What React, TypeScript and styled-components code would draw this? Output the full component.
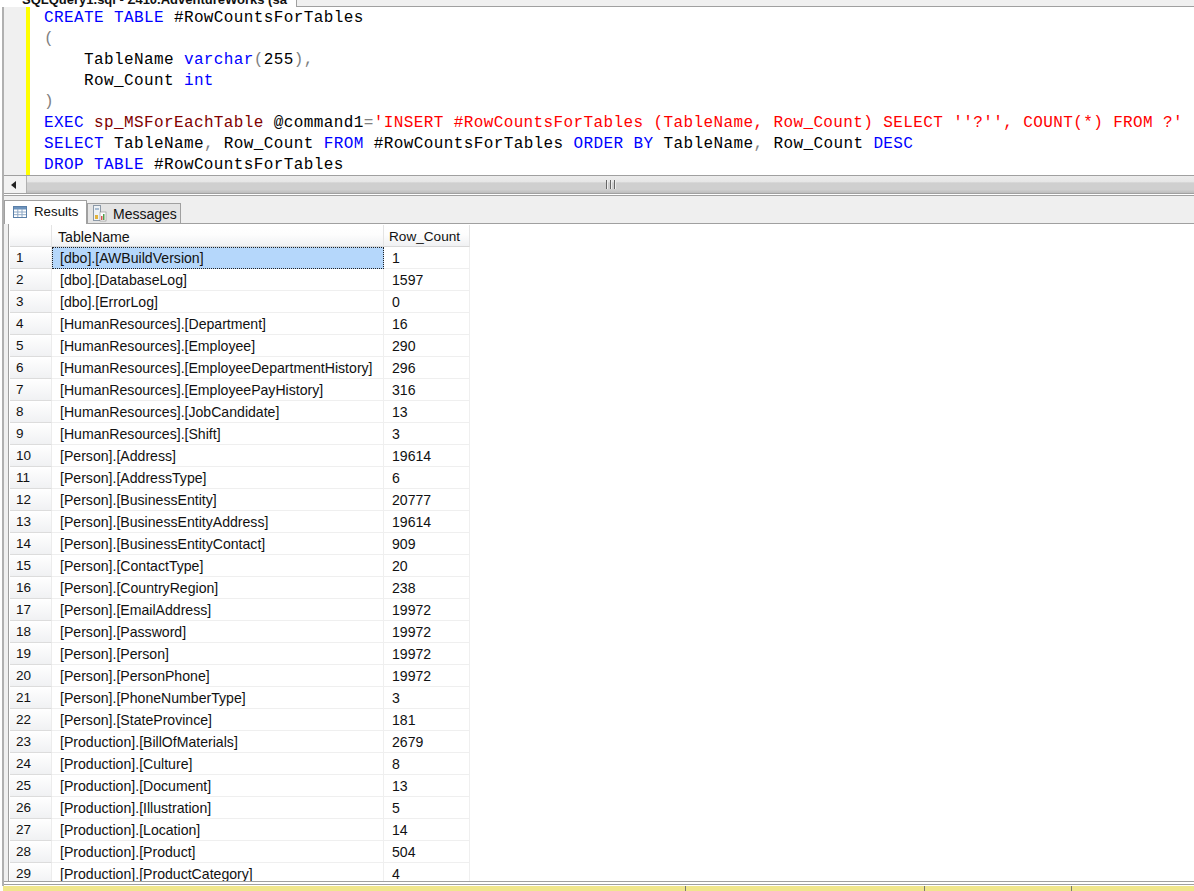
import React from "react";
import styled, { createGlobalStyle } from "styled-components";

const Global = createGlobalStyle`
  html, body { margin: 0; padding: 0; background: #fff; overflow: hidden; }
  #root { width: 1194px; height: 891px; }
`;

const Page = styled.div`
  width: 1194px; height: 891px; display: flex; flex-direction: column; overflow: hidden;
  background: #fff; font-family: "Liberation Sans", Arial, sans-serif;
`;
const TabStrip = styled.div`
  height: 7px; display: flex; background: #fff; overflow: hidden; flex: none;
`;
const DocTab = styled.div`
  width: 296px; flex: none; height: 7px; overflow: hidden; box-sizing: border-box;
  font: bold 13px "Liberation Sans", sans-serif; color: #111;
  white-space: nowrap; line-height: 0px; padding-left: 22px; padding-right: 2px;
`;
const TabStripRest = styled.div`
  flex: 1; height: 7px; box-sizing: border-box; background: #f0f0f0;
  border-left: 1px solid #a0a0a0; border-bottom: 1px solid #a0a0a0;
`;
const Frame = styled.div`
  flex: 1; min-height: 0; display: flex; flex-direction: column;
  margin-left: 2px; border-left: 2px solid #b0b0b0;
`;
const Editor = styled.div`
  height: 168px; flex: none; display: flex;
`;
const Gutter = styled.div`
  width: 22px; background: #f0f0f0; flex: none;
`;
const ChangeBar = styled.div`
  width: 4px; background: #ffff00; flex: none;
`;
const Code = styled.pre`
  margin: 0; padding: 1px 0 0 14px; font: 16px/21px "Liberation Mono", monospace; letter-spacing: 0.39px; color: #000;
  white-space: pre; overflow: hidden; flex: 1; min-width: 0;
`;
const K = styled.span`color: #0000ff;`;
const G = styled.span`color: #808080;`;
const S = styled.span`color: #ff0000;`;
const M = styled.span`color: #800000;`;

const HScroll = styled.div`
  height: 17px; flex: none; display: flex; border-top: 1px solid #a0a0a0; border-bottom: 1px solid #a0a0a0;
  background: linear-gradient(#ececec 0, #e6e6e6 35%, #cfcfcf 40%, #cfcfcf 80%, #bdbdbd 100%);
`;
const ArrowBox = styled.div`
  width: 23px; flex: none; box-sizing: border-box; padding-right: 3px; background: #f2f2f2;
  display: flex; align-items: center; justify-content: center; border-right: 1px solid #b0b0b0;
`;
const Thumb = styled.div`
  flex: 1; display: flex; align-items: center; justify-content: center;
`;
const Grip = styled.div`
  display: flex; gap: 2px;
  i { display: block; width: 1px; height: 9px; background: #666; border-right: 1px solid #eee; }
`;
const TabBar = styled.div`
  height: 29px; flex: none; box-sizing: border-box; background: #efefef; display: flex; align-items: flex-end;
  border-top: 1px solid #a0a0a0; border-bottom: 1px solid #a0a0a0; margin-top: 1px;
`;
const ResTab = styled.div<{ $active?: boolean }>`
  height: ${p => (p.$active ? 24 : 21)}px; box-sizing: border-box; display: flex; align-items: center;
  gap: ${p => (p.$active ? 7 : 6)}px;
  font-size: ${p => (p.$active ? 13.3 : 14)}px; color: #111;
  width: ${p => (p.$active ? 83 : 94)}px;
  padding: 0 0 ${p => (p.$active ? 2 : 0)}px ${p => (p.$active ? 8 : 4)}px;
  background: ${p => (p.$active ? "#fff" : "#e4e4e4")};
  border: 1px solid #a0a0a0; border-bottom: ${p => (p.$active ? "0" : "1px solid #a0a0a0")};
  margin-bottom: -1px; position: relative;
`;
const Results = styled.div`
  flex: 1; min-height: 0; overflow: hidden; background: #fff; display: flex;
`;
const Margin = styled.div`
  width: 4px; flex: none; background: #f0f0f0; border-right: 1px solid #a0a0a0;
`;
const GridArea = styled.div`
  flex: 1; min-width: 0; overflow: hidden; padding-left: 1px;
`;
const Table = styled.div`
  display: grid; grid-template-columns: 42px 332px 86px; grid-auto-rows: 22px; width: 460px;
  font-size: 14.1px; color: #111; margin-top: 1px;
`;
const HeadCell = styled.div<{ $narrow?: boolean }>`
  height: 22px; box-sizing: border-box; background: linear-gradient(#fff 0%, #fdfdfd 45%, #f0f1f3 100%);
  border-right: 1px solid #e4e4e4; border-bottom: 1px solid #d8d8d8;
  padding-left: ${p => (p.$narrow ? 5 : 6)}px; line-height: 24px;
  font-size: ${p => (p.$narrow ? 13.6 : 14.2)}px; white-space: nowrap;
`;
const RowHead = styled.div`
  box-sizing: border-box; background: linear-gradient(#fff, #f0f1f3); border-right: 1px solid #ececec;
  border-bottom: 1px solid #dcdcdc; padding-left: 6px; line-height: 22px; font-size: 13.5px;
`;
const Cell = styled.div<{ $selected?: boolean }>`
  box-sizing: border-box; padding-left: 8px; line-height: 22px; white-space: nowrap; overflow: hidden;
  border-right: 1px solid #efefef; border-bottom: 1px solid #efefef;
  ${p => p.$selected && "background: #b5d7fb; outline: 1px dotted #222; outline-offset: -1px; border-color: transparent;"}
`;
const FootRule = styled.div`
  height: 4px; flex: none; box-sizing: border-box; border-top: 1px solid #a0a0a0; border-bottom: 1px solid #a0a0a0;
  background: #fff; margin-bottom: 1px;
`;
const Status = styled.div`
  height: 5px; flex: none; background: #f0e68c; display: flex; margin-left: 3px;
`;
const StatusPane = styled.div<{ $w?: number }>`
  ${p => (p.$w ? `width: ${p.$w}px; flex: none;` : "flex: 1;")}
  border-right: 1px solid #7a7a6a; box-sizing: border-box;
  &:last-child { border-right: 0; }
`;

const rows: [string, string][] = [
  ["[dbo].[AWBuildVersion]", "1"], ["[dbo].[DatabaseLog]", "1597"], ["[dbo].[ErrorLog]", "0"],
  ["[HumanResources].[Department]", "16"], ["[HumanResources].[Employee]", "290"],
  ["[HumanResources].[EmployeeDepartmentHistory]", "296"], ["[HumanResources].[EmployeePayHistory]", "316"],
  ["[HumanResources].[JobCandidate]", "13"], ["[HumanResources].[Shift]", "3"], ["[Person].[Address]", "19614"],
  ["[Person].[AddressType]", "6"], ["[Person].[BusinessEntity]", "20777"], ["[Person].[BusinessEntityAddress]", "19614"],
  ["[Person].[BusinessEntityContact]", "909"], ["[Person].[ContactType]", "20"], ["[Person].[CountryRegion]", "238"],
  ["[Person].[EmailAddress]", "19972"], ["[Person].[Password]", "19972"], ["[Person].[Person]", "19972"],
  ["[Person].[PersonPhone]", "19972"], ["[Person].[PhoneNumberType]", "3"], ["[Person].[StateProvince]", "181"],
  ["[Production].[BillOfMaterials]", "2679"], ["[Production].[Culture]", "8"], ["[Production].[Document]", "13"],
  ["[Production].[Illustration]", "5"], ["[Production].[Location]", "14"], ["[Production].[Product]", "504"],
  ["[Production].[ProductCategory]", "4"],
];

const GridIcon = () => (
  <svg width="14" height="12" viewBox="0 0 14 12">
    <rect x="0.5" y="0.5" width="13" height="11" fill="#fff" stroke="#5a7fa8" />
    <rect x="1" y="1" width="12" height="2.5" fill="#6d93bd" />
    <path d="M1 6h12M1 8.7h12M4.8 3v8M9 3v8" stroke="#8fa9c6" strokeWidth="1" />
  </svg>
);
const MsgIcon = () => (
  <svg width="15" height="17" viewBox="0 0 15 17">
    <rect x="1.5" y="0.5" width="7" height="15" fill="#eef2f6" stroke="#8d9aa8" />
    <rect x="3" y="3" width="4" height="2" fill="#a9bdd2" />
    <rect x="8" y="7" width="6" height="9" fill="#fff" stroke="#888" strokeWidth="0.6" />
    <rect x="9" y="11" width="1.5" height="4" fill="#d9534f" />
    <rect x="11" y="9" width="1.5" height="6" fill="#4f9d4f" />
    <rect x="3" y="10" width="3" height="4" fill="#e2b23c" />
  </svg>
);

export default function App() {
  return (
    <Page>
      <Global />
      <TabStrip>
        <DocTab>SQLQuery1.sql - Z410.AdventureWorks (sa</DocTab>
        <TabStripRest />
      </TabStrip>
      <Frame>
        <Editor>
          <Gutter />
          <ChangeBar />
          <Code>
            <K>CREATE TABLE</K> #RowCountsForTables{"\n"}
            <G>(</G>{"\n"}
            {"    "}TableName <K>varchar</K><G>(</G>255<G>),</G>{"\n"}
            {"    "}Row_Count <K>int</K>{"\n"}
            <G>)</G>{"\n"}
            <K>EXEC</K> <M>sp_MSForEachTable</M> @command1<G>=</G><S>'INSERT #RowCountsForTables (TableName, Row_Count) SELECT ''?'', COUNT(*) FROM ?'</S>{"\n"}
            <K>SELECT</K> TableName<G>,</G> Row_Count <K>FROM</K> #RowCountsForTables <K>ORDER BY</K> TableName<G>,</G> Row_Count <K>DESC</K>{"\n"}
            <K>DROP TABLE</K> #RowCountsForTables
          </Code>
        </Editor>
        <HScroll>
          <ArrowBox>
            <svg width="6" height="8" viewBox="0 0 6 8"><path d="M5 0v8L0 4z" fill="#222" /></svg>
          </ArrowBox>
          <Thumb><Grip><i /><i /><i /></Grip></Thumb>
        </HScroll>
        <TabBar>
          <ResTab $active><GridIcon />Results</ResTab>
          <ResTab><MsgIcon />Messages</ResTab>
        </TabBar>
        <Results>
          <Margin />
          <GridArea>
            <Table>
              <HeadCell />
              <HeadCell>TableName</HeadCell>
              <HeadCell $narrow>Row_Count</HeadCell>
              {rows.map(([n, c], i) => (
                <React.Fragment key={n}>
                  <RowHead>{i + 1}</RowHead>
                  <Cell $selected={i === 0}>{n}</Cell>
                  <Cell>{c}</Cell>
                </React.Fragment>
              ))}
            </Table>
          </GridArea>
        </Results>
        <FootRule />
      </Frame>
      <Status>
        <StatusPane $w={683} />
        <StatusPane $w={239} />
        <StatusPane $w={147} />
        <StatusPane />
      </Status>
    </Page>
  );
}
